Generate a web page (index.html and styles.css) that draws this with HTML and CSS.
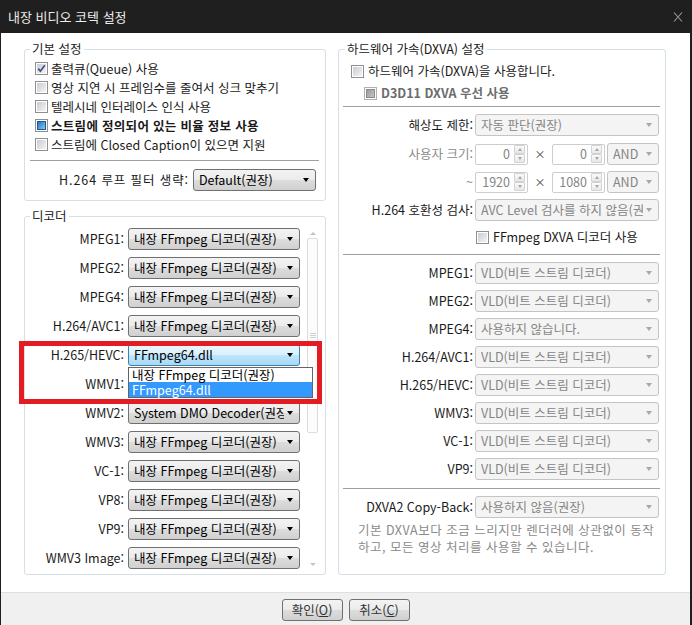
FILE: index.html
```html
<!DOCTYPE html>
<html lang="ko">
<head>
<meta charset="utf-8">
<title>내장 비디오 코텍 설정</title>
<link rel="stylesheet" href="styles.css">
</head>
<body>
<div class="window">
  <div class="titlebar">
    <span class="title">내장 비디오 코텍 설정</span>
    <span class="close"><svg width="10" height="10" viewBox="0 0 10 10"><path d="M1 0.5 L9 9.5 M9 0.5 L1 9.5" stroke="#9a9a9a" stroke-width="1.1" fill="none"/></svg></span>
  </div>
  <div class="main">
    <div class="col col-left">
      <fieldset class="group group-basic">
        <legend>기본 설정</legend>
        <div class="checks">
          <div class="check"><span class="cb"><svg width="9" height="9" viewBox="0 0 9 9"><path d="M1.3 4.6 L3.4 7.2 L7.8 1.2" stroke="#3b528c" stroke-width="1.7" fill="none"/></svg></span>출력큐(Queue) 사용</div>
          <div class="check"><span class="cb"></span>영상 지연 시 프레임수를 줄여서 싱크 맞추기</div>
          <div class="check"><span class="cb"></span>텔레시네 인터레이스 인식 사용</div>
          <div class="check bold"><span class="cb"><span class="ind"></span></span>스트림에 정의되어 있는 비율 정보 사용</div>
          <div class="check"><span class="cb"></span>스트림에 Closed Caption이 있으면 지원</div>
        </div>
        <div class="sep"></div>
        <div class="filter-row">
          <span class="lbl wide-lbl">H.264 루프 필터 생략:</span>
          <div class="combo combo-filter"><span class="txt">Default(권장)</span><span class="arr"></span></div>
        </div>
      </fieldset>
      <fieldset class="group group-decoder">
        <legend>디코더</legend>
        <div class="decoder-body">
          <div class="dec-grid">
            <span class="lbl">MPEG1:</span><div class="combo"><span class="txt">내장 FFmpeg 디코더(권장)</span><span class="arr"></span></div>
            <span class="lbl">MPEG2:</span><div class="combo"><span class="txt">내장 FFmpeg 디코더(권장)</span><span class="arr"></span></div>
            <span class="lbl">MPEG4:</span><div class="combo"><span class="txt">내장 FFmpeg 디코더(권장)</span><span class="arr"></span></div>
            <span class="lbl">H.264/AVC1:</span><div class="combo"><span class="txt">내장 FFmpeg 디코더(권장)</span><span class="arr"></span></div>
            <span class="lbl">H.265/HEVC:</span>
            <div class="cell">
              <div class="combo focus"><span class="txt">FFmpeg64.dll</span><span class="arr"></span></div>
              <div class="dropdown">
                <div class="dd-item">내장 FFmpeg 디코더(권장)</div>
                <div class="dd-item sel">FFmpeg64.dll</div>
              </div>
            </div>
            <span class="lbl">WMV1:</span><div class="combo covered"><span class="txt"></span><span class="arr"></span></div>
            <span class="lbl">WMV2:</span><div class="combo"><span class="txt">System DMO Decoder(권장)</span><span class="arr"></span></div>
            <span class="lbl">WMV3:</span><div class="combo"><span class="txt">내장 FFmpeg 디코더(권장)</span><span class="arr"></span></div>
            <span class="lbl">VC-1:</span><div class="combo"><span class="txt">내장 FFmpeg 디코더(권장)</span><span class="arr"></span></div>
            <span class="lbl">VP8:</span><div class="combo"><span class="txt">내장 FFmpeg 디코더(권장)</span><span class="arr"></span></div>
            <span class="lbl">VP9:</span><div class="combo"><span class="txt">내장 FFmpeg 디코더(권장)</span><span class="arr"></span></div>
            <span class="lbl">WMV3 Image:</span><div class="combo"><span class="txt">내장 FFmpeg 디코더(권장)</span><span class="arr"></span></div>
          </div>
          <div class="scrollbar">
            <div class="sb-btn up"></div>
            <div class="sb-thumb"><span class="grip"></span></div>
            <div class="sb-track"></div>
            <div class="sb-btn dn"></div>
          </div>
          <div class="highlight"></div>
        </div>
      </fieldset>
    </div>
    <div class="col col-right">
      <fieldset class="group group-hw">
        <legend>하드웨어 가속(DXVA) 설정</legend>
        <div class="hw-check c1"><span class="cb"></span>하드웨어 가속(DXVA)을 사용합니다.</div>
        <div class="hw-check c2"><span class="cb dis"><span class="ind gray"></span></span>D3D11 DXVA 우선 사용</div>
        <div class="sep sep-r"></div>
        <div class="frow r1">
          <span class="flabel">해상도 제한:</span>
          <div class="fctl"><div class="combo dis wide"><span class="txt">자동 판단(권장)</span><span class="arr"></span></div></div>
        </div>
        <div class="frow r2">
          <span class="flabel dim">사용자 크기:</span>
          <div class="fctl">
            <div class="spin"><span class="v">0</span><span class="sbtns"><i class="up"></i><i class="dn"></i></span></div>
            <span class="times">×</span>
            <div class="spin"><span class="v">0</span><span class="sbtns"><i class="up"></i><i class="dn"></i></span></div>
            <div class="combo dis and"><span class="txt">AND</span><span class="arr"></span></div>
          </div>
        </div>
        <div class="frow r3">
          <span class="flabel dim">~</span>
          <div class="fctl">
            <div class="spin"><span class="v">1920</span><span class="sbtns"><i class="up"></i><i class="dn"></i></span></div>
            <span class="times">×</span>
            <div class="spin"><span class="v">1080</span><span class="sbtns"><i class="up"></i><i class="dn"></i></span></div>
            <div class="combo dis and"><span class="txt">AND</span><span class="arr"></span></div>
          </div>
        </div>
        <div class="frow r3">
          <span class="flabel">H.264 호환성 검사:</span>
          <div class="fctl"><div class="combo dis wide"><span class="txt">AVC Level 검사를 하지 않음(권장)</span><span class="arr"></span></div></div>
        </div>
        <div class="hw-check c3"><span class="cb"></span>FFmpeg DXVA 디코더 사용</div>
        <div class="sep sep-r s2"></div>
        <div class="frow d1"><span class="flabel">MPEG1:</span><div class="fctl"><div class="combo dis wide"><span class="txt">VLD(비트 스트림 디코더)</span><span class="arr"></span></div></div></div>
        <div class="frow dn"><span class="flabel">MPEG2:</span><div class="fctl"><div class="combo dis wide"><span class="txt">VLD(비트 스트림 디코더)</span><span class="arr"></span></div></div></div>
        <div class="frow dn"><span class="flabel">MPEG4:</span><div class="fctl"><div class="combo dis wide"><span class="txt">사용하지 않습니다.</span><span class="arr"></span></div></div></div>
        <div class="frow dn"><span class="flabel">H.264/AVC1:</span><div class="fctl"><div class="combo dis wide"><span class="txt">VLD(비트 스트림 디코더)</span><span class="arr"></span></div></div></div>
        <div class="frow dn"><span class="flabel">H.265/HEVC:</span><div class="fctl"><div class="combo dis wide"><span class="txt">VLD(비트 스트림 디코더)</span><span class="arr"></span></div></div></div>
        <div class="frow dn"><span class="flabel">WMV3:</span><div class="fctl"><div class="combo dis wide"><span class="txt">VLD(비트 스트림 디코더)</span><span class="arr"></span></div></div></div>
        <div class="frow dn"><span class="flabel">VC-1:</span><div class="fctl"><div class="combo dis wide"><span class="txt">VLD(비트 스트림 디코더)</span><span class="arr"></span></div></div></div>
        <div class="frow dn"><span class="flabel">VP9:</span><div class="fctl"><div class="combo dis wide"><span class="txt">VLD(비트 스트림 디코더)</span><span class="arr"></span></div></div></div>
        <div class="sep sep-r s3"></div>
        <div class="frow d1"><span class="flabel">DXVA2 Copy-Back:</span><div class="fctl"><div class="combo dis wide"><span class="txt">사용하지 않음(권장)</span><span class="arr"></span></div></div></div>
        <div class="desc">기본 DXVA보다 조금 느리지만 렌더러에 상관없이 동작<br>하고, 모든 영상 처리를 사용할 수 있습니다.</div>
      </fieldset>
    </div>
  </div>
  <div class="footer">
    <button class="btn">확인(<u>O</u>)</button>
    <button class="btn">취소(<u>C</u>)</button>
  </div>
</div>
</body>
</html>
```

FILE: styles.css
```css
* { box-sizing: border-box; }
html, body { margin: 0; padding: 0; }
body {
  width: 692px;
  height: 625px;
  overflow: hidden;
  background: #1f1f1f;
  font-family: "Noto Sans CJK KR", "Noto Sans", sans-serif;
  font-size: 12.5px;
  line-height: 16px;
  color: #1a1a1a;
}
.window {
  width: 692px;
  height: 625px;
  display: flex;
  flex-direction: column;
  border-left: 1px solid #1f1f1f;
  border-right: 2px solid #1f1f1f;
}
.titlebar {
  height: 33px;
  flex: none;
  background: #1f1f1f;
  display: flex;
  align-items: center;
  justify-content: space-between;
  padding: 0 7px 0 7px;
}
.title {
  color: #ededed;
  font-size: 13px;
  line-height: 18px;
}
.close { display: flex; }

.main {
  flex: 1;
  background: #fff;
  display: flex;
  gap: 12px;
  padding: 9px 24px 17px 23px;
}
.col { display: flex; flex-direction: column; }
.col-left { width: 302px; }
.col-right { width: 328px; }

.group {
  margin: 0;
  padding: 0;
  min-width: 0;
  border: 1px solid #d5dfe5;
  border-radius: 3px;
}
.group legend {
  padding: 0 2px;
  margin-left: 5px;
  line-height: 14px;
  color: #1a1a1a;
}
.group-hw legend { margin-left: 6px; }

/* checkboxes */
.cb {
  width: 13px;
  height: 13px;
  flex: none;
  border: 1px solid #8e8f8f;
  padding: 1px;
  background: linear-gradient(135deg, #c9ccd1, #f3f3f4) content-box, #fff;
  display: inline-flex;
  align-items: center;
  justify-content: center;
}
.cb svg { display: block; }
.cb .ind {
  width: 9px;
  height: 9px;
  border: 1px solid #1d5a98;
  background: linear-gradient(135deg, #2a74c2, #7ccbef);
}
.cb.dis { border-color: #b1b1b1; }
.cb .ind.gray {
  border-color: #8c8c8c;
  background: linear-gradient(135deg, #9a9a9a, #c4c4c4);
}

.checks { padding: 3px 0 0 10px; }
.check {
  display: flex;
  align-items: center;
  gap: 3px;
  height: 19px;
  white-space: nowrap;
}
.check.bold { font-weight: 700; letter-spacing: 0.3px; }

.sep {
  height: 1px;
  background: #a0a0a0;
  margin: 6px 6px 0 5px;
}
.filter-row {
  display: flex;
  justify-content: flex-end;
  align-items: center;
  gap: 4px;
  margin-top: 8px;
  padding-right: 9px;
}
.wide-lbl { letter-spacing: 0.9px; }
.group-basic { padding-bottom: 9px; }
.combo-filter { width: 123px; }

/* combos */
.combo {
  height: 22px;
  display: flex;
  align-items: center;
  border: 1px solid #707070;
  border-radius: 3px;
  background: linear-gradient(#f3f3f3, #ebebeb 50%, #dddddd 50%, #d0d0d0);
  padding: 0 5px 0 5px;
  white-space: nowrap;
  color: #000;
}
.combo .txt { flex: 1; min-width: 0; overflow: hidden; line-height: 20px; }
.combo .arr {
  flex: none;
  width: 0;
  height: 0;
  margin-left: 3px;
  margin-right: 1px;
  border-left: 3.5px solid transparent;
  border-right: 3.5px solid transparent;
  border-top: 4px solid #000;
}
.combo.focus {
  border-color: #3c7fb1;
  background: linear-gradient(#eaf6fd, #d9f0fc 50%, #bee6fd 50%, #a7d9f5);
}
.combo.dis {
  border-color: #c4c4c4;
  background: #f4f4f4;
  color: #858585;
}
.combo.dis .arr { border-top-color: #a8a8a8; }

/* decoder */
.group-decoder { flex: 1; margin-top: 8px; }
.decoder-body {
  display: flex;
  align-items: flex-start;
  padding-top: 5px;
  position: relative;
}
.dec-grid {
  display: grid;
  grid-template-columns: 99px 172px;
  column-gap: 4px;
  row-gap: 7px;
  grid-auto-rows: 22px;
  align-items: center;
}
.lbl { text-align: right; white-space: nowrap; }
.cell { position: relative; }
.dropdown {
  position: absolute;
  top: 23px;
  left: 0;
  width: 185px;
  border: 1px solid #646464;
  background: #fff;
  z-index: 2;
}
.dd-item {
  height: 14px;
  line-height: 14px;
  padding-left: 3px;
  white-space: nowrap;
  color: #000;
}
.dd-item.sel { height: 15px; line-height: 15px; background: #3399ff; color: #fff; }

.scrollbar {
  width: 11px;
  margin-left: 7px;
  align-self: stretch;
  display: flex;
  flex-direction: column;
}
.sb-btn {
  height: 10px;
  flex: none;
  display: flex;
  align-items: center;
  justify-content: center;
}
.sb-btn::before {
  content: "";
  border-left: 3px solid transparent;
  border-right: 3px solid transparent;
}
.sb-btn.up::before { border-bottom: 3px solid #c4c4c4; }
.sb-btn.dn::before { border-top: 3px solid #c4c4c4; }
.sb-thumb {
  height: 195px;
  flex: none;
  border: 1px solid #dcdcdc;
  border-radius: 2px;
  background: #fcfcfc;
  display: flex;
  align-items: center;
  justify-content: center;
}
.grip {
  width: 6px;
  height: 5px;
  background: repeating-linear-gradient(#cfcfcf 0 1px, transparent 1px 2px);
}
.sb-track { flex: 1; }

.highlight {
  position: absolute;
  left: -6px;
  top: 118px;
  width: 303px;
  height: 63px;
  border: 5px solid #e31c23;
  z-index: 3;
}

/* right group */
.group-hw { flex: 1; display: flex; flex-direction: column; }
.hw-check {
  display: flex;
  align-items: center;
  gap: 4px;
  height: 20px;
  white-space: nowrap;
}
.hw-check.c1 { margin-top: 5px; padding-left: 12px; }
.hw-check.c2 { margin-top: 2px; padding-left: 25px; font-weight: 700; color: #6d6d6d; }
.hw-check.c3 { margin-top: 6px; padding-left: 137px; }
.sep-r { margin: 3px 5px 0 4px; }
.sep-r.s2 { margin-top: 7px; }
.sep-r.s3 { margin-top: 8px; }

.frow { display: flex; align-items: center; height: 22px; }
.frow.r1 { margin-top: 7px; }
.frow.r2 { margin-top: 7px; }
.frow.r3 { margin-top: 6px; }
.frow.d1 { margin-top: 7px; }
.frow.dn { margin-top: 6px; }
.flabel {
  width: 134px;
  margin-right: 2px;
  text-align: right;
  white-space: nowrap;
}
.flabel.dim { color: #8a8a8a; }
.fctl { width: 184px; display: flex; align-items: center; }
.combo.wide { width: 184px; }
.combo.and { width: 52px; margin-left: 2px; }

.spin {
  width: 53px;
  height: 21px;
  border: 1px solid #cdcdcd;
  border-radius: 2px;
  background: #fff;
  display: flex;
  align-items: center;
  justify-content: flex-end;
  padding: 0 2px 0 0;
  color: #858585;
}
.spin .v { margin-right: 4px; }
.sbtns {
  width: 11px;
  height: 18px;
  display: flex;
  flex-direction: column;
}
.sbtns i {
  flex: 1;
  border: 1px solid #d2d2d2;
  border-radius: 1px;
  background: linear-gradient(#fbfbfb, #e7e7e7);
  display: flex;
  align-items: center;
  justify-content: center;
}
.sbtns i::before {
  content: "";
  border-left: 2.5px solid transparent;
  border-right: 2.5px solid transparent;
}
.sbtns i.up::before { border-bottom: 3px solid #a6a6a6; }
.sbtns i.dn::before { border-top: 3px solid #a6a6a6; }
.times {
  width: 24px;
  text-align: center;
  color: #444;
  font-size: 11px;
}

.desc {
  margin-top: 3px;
  padding-left: 19px;
  line-height: 17px;
  letter-spacing: 0.5px;
  color: #8a8a8a;
  white-space: nowrap;
}

/* footer */
.footer {
  height: 33px;
  flex: none;
  background: #f0f0f0;
  border-top: 1px solid #dfdfdf;
  display: flex;
  justify-content: center;
  align-items: flex-start;
  gap: 6px;
  padding-top: 6px;
}
.btn {
  width: 61px;
  height: 22px;
  border: 1px solid #707070;
  border-radius: 3px;
  background: linear-gradient(#f3f3f3, #ebebeb 50%, #dddddd 50%, #d0d0d0);
  font: inherit;
  color: #333;
  padding: 0;
  line-height: 18px;
}
```
